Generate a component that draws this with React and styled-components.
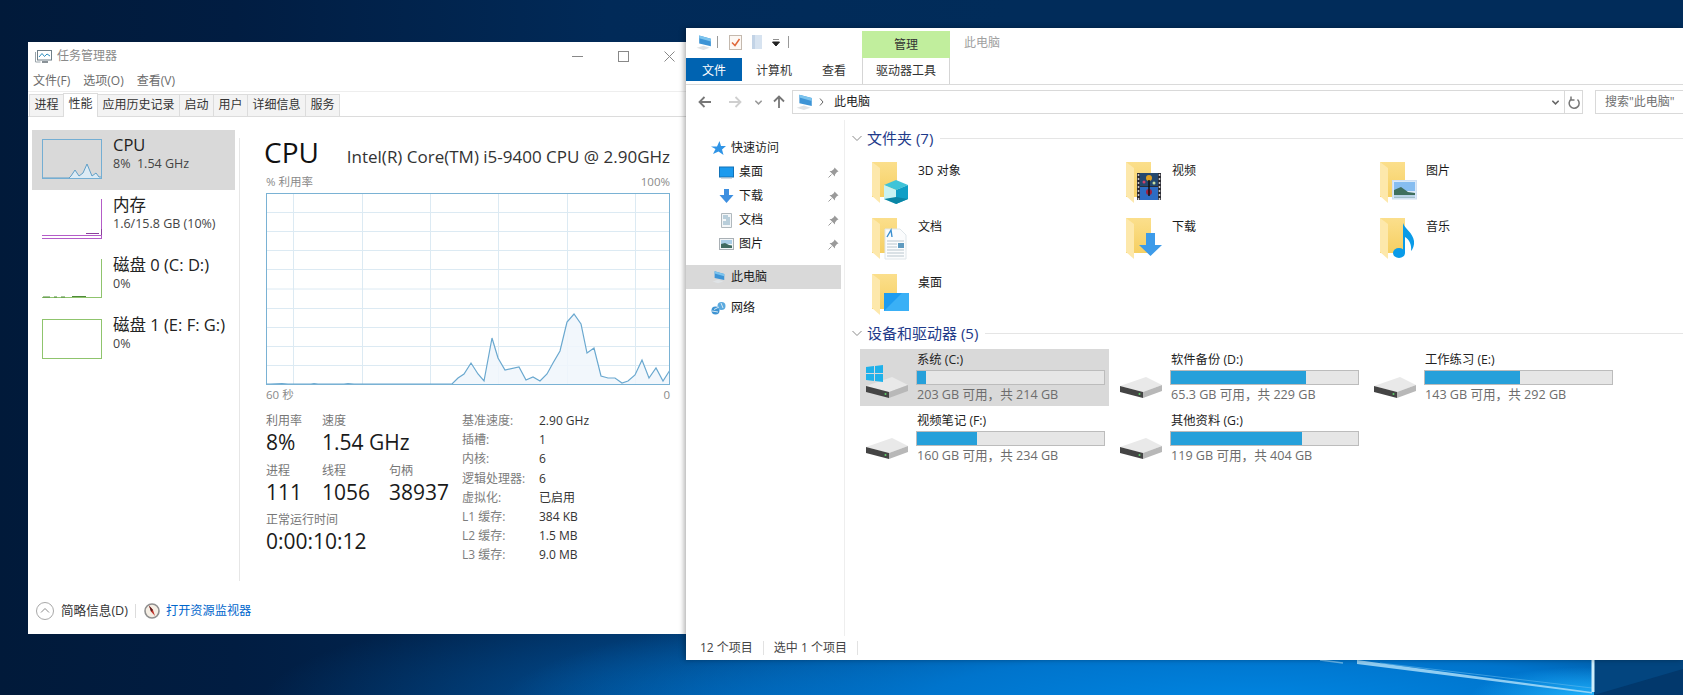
import React from 'react'
import styled, { createGlobalStyle } from 'styled-components'

const FONT = `"Open Sans", "Noto Sans CJK SC", sans-serif`

const GlobalStyle = createGlobalStyle`
  html, body { margin: 0; padding: 0; height: 100%; overflow: hidden; }
  body { font-family: ${FONT}; font-size: 12px; }
  * { box-sizing: border-box; }
`

const Desktop = styled.div`
  position: relative;
  width: 1683px;
  height: 695px;
  overflow: hidden;
  background:
    radial-gradient(ellipse 120px 30px at 1590px 697px, #1fb0fa 0%, rgba(20, 150, 240, 0) 100%),
    radial-gradient(ellipse 760px 120px at 1260px 705px, #0086e2 0%, #0074cc 45%, rgba(0, 100, 180, 0) 100%),
    radial-gradient(ellipse 520px 110px at 780px 705px, rgba(0, 95, 175, 0.9) 0%, rgba(0, 80, 150, 0) 100%),
    linear-gradient(90deg, #011a3a 0%, #011d42 14%, #012a58 36%, #012c5a 60%, #012c5a 100%);
`

const Wallpaper = styled.svg`
  position: absolute;
  left: 1300px;
  top: 655px;
`

/* ---------- task manager ---------- */

const TaskWindow = styled.section`
  position: absolute;
  left: 28px;
  top: 42px;
  width: 665px;
  height: 592px;
  background: #fff;
  display: flex;
  flex-direction: column;
  color: #222;
`
const TitleBar = styled.div`
  height: 28px;
  display: flex;
  align-items: center;
  padding-left: 7px;
  gap: 5px;
  color: #8a8a8a;
  line-height: 16px;
`
const WindowButtons = styled.div`
  margin-left: auto;
  display: flex;
  align-items: center;
  padding-right: 1px;
`
const WindowButton = styled.span`
  width: 46px;
  display: flex;
  justify-content: center;
`
const MenuBar = styled.div`
  height: 22px;
  display: flex;
  align-items: center;
  gap: 13px;
  padding-left: 5px;
  color: #6b6b6b;
  border-bottom: 1px solid #eeeeee;
  line-height: 16px;
`
const TabStrip = styled.div`
  height: 25px;
  display: flex;
  align-items: flex-end;
  padding-left: 2px;
  border-bottom: 1px solid #dcdcdc;
`
const TaskTab = styled.div`
  height: ${p => (p.$active ? 24 : 22)}px;
  padding: 0 4.5px;
  line-height: 20px;
  color: #333;
  background: ${p => (p.$active ? '#fff' : '#f3f3f3')};
  border-top: 1px solid #dcdcdc;
  border-right: 1px solid #dcdcdc;
  box-shadow: ${p => (p.$active ? '-1px 0 0 #dcdcdc' : 'none')};
  margin-bottom: ${p => (p.$active ? -1 : 0)}px;
  &:first-child { box-shadow: -1px 0 0 #dcdcdc; }
`
const TaskBody = styled.div`
  flex: 1;
  display: flex;
  min-height: 0;
`
const Sidebar = styled.div`
  width: 211px;
  padding: 13px 4px 0 4px;
`
const PerfItem = styled.div`
  height: 60px;
  display: flex;
  padding-left: 10px;
  gap: 11px;
  background: ${p => (p.$selected ? '#d9d9d9' : 'transparent')};
`
const Thumb = styled.svg`
  margin-top: 9px;
  flex: none;
`
const PerfText = styled.div`
  padding-top: 5px;
  white-space: nowrap;
`
const PerfTitle = styled.div`
  font-size: 16.5px;
  line-height: 20px;
  color: #222;
`
const PerfSub = styled.div`
  font-size: 12.5px;
  line-height: 18px;
  color: #444;
  white-space: pre;
`
const Divider = styled.div`
  width: 1px;
  height: 443px;
  margin-top: 21px;
  background: #e6e6e6;
`
const PerfPanel = styled.div`
  width: 404px;
  margin-left: 26px;
  padding-top: 17px;
`
const PanelHead = styled.div`
  display: flex;
  justify-content: space-between;
  align-items: baseline;
  height: 36px;
`
const PanelTitle = styled.div`
  font-size: 28px;
  line-height: 36px;
  margin-left: -2px;
  color: #111;
`
const PanelModel = styled.div`
  font-size: 17px;
  line-height: 20px;
  color: #333;
  white-space: nowrap;
`
const ChartLabels = styled.div`
  display: flex;
  justify-content: space-between;
  font-size: 11.5px;
  line-height: 16px;
  color: #8a8a8a;
  margin-top: ${p => p.$top}px;
`
const Chart = styled.svg`
  display: block;
  margin-top: 3px;
`
const Stats = styled.div`
  display: flex;
  margin-top: 10px;
`
const StatColumn = styled.div`
  width: 196px;
  display: flex;
  flex-direction: column;
  gap: 7.5px;
`
const StatRow = styled.div`
  display: flex;
`
const StatCell = styled.div`
  width: ${p => p.$w}px;
  flex: none;
`
const StatLabel = styled.div`
  font-size: 12px;
  line-height: 16px;
  color: #777;
  white-space: nowrap;
`
const StatValue = styled.div`
  font-size: 21px;
  line-height: 26px;
  color: #1a1a1a;
  white-space: nowrap;
`
const SpecTable = styled.div`
  display: grid;
  grid-template-columns: 77px auto;
  grid-auto-rows: 19.2px;
  align-items: center;
  line-height: 16px;
  margin-top: -1.5px;
`
const SpecLabel = styled.span`
  color: #7d7d7d;
  white-space: nowrap;
`
const SpecValue = styled.span`
  color: #333;
  white-space: nowrap;
`
const TaskFooter = styled.div`
  height: 43px;
  padding: 0 0 3px 8px;
  display: flex;
  align-items: center;
  line-height: 16px;
`
const FooterText = styled.span`
  margin-left: 7px;
  font-size: 12.6px;
  color: #333;
`
const FooterSep = styled.span`
  width: 1px;
  height: 14px;
  background: #dcdcdc;
  margin: 0 8px 0 7px;
`
const FooterLink = styled.span`
  color: #0066cc;
  margin-left: 6px;
  font-size: 12.2px;
`

/* ---------- explorer ---------- */

const ExplorerWindow = styled.section`
  position: absolute;
  left: 686px;
  top: 28px;
  right: 0;
  height: 632px;
  background: #fff;
  display: flex;
  flex-direction: column;
  box-shadow: -2px 0 5px rgba(0, 0, 0, 0.3);
  color: #1a1a1a;
`
const QuickBar = styled.div`
  height: 30px;
  flex: none;
  display: flex;
`
const QuickTools = styled.div`
  width: 176px;
  display: flex;
  align-items: center;
  padding: 0 0 2px 10px;
`
const QuickSep = styled.span`
  width: 1px;
  height: 12px;
  background: #999;
  margin: 0 ${p => p.$right}px 0 ${p => p.$left}px;
`
const ManageTab = styled.div`
  width: 88px;
  margin-top: 3px;
  background: #c1ee9d;
  text-align: center;
  line-height: 27px;
  color: #333;
`
const WindowName = styled.div`
  margin-left: 14px;
  line-height: 30px;
  color: #a0a0a0;
`
const RibbonTabs = styled.div`
  height: 27px;
  flex: none;
  display: flex;
  align-items: flex-start;
  border-bottom: 1px solid #dadada;
`
const FileTab = styled.div`
  width: 56px;
  height: 23px;
  background: #0063b1;
  color: #fff;
  text-align: center;
  line-height: 25px;
`
const RibbonTab = styled.div`
  width: ${p => p.$w}px;
  height: 26px;
  padding-top: 4px;
  text-align: center;
  line-height: 18px;
  color: #333;
  border-left: ${p => (p.$tool ? '1px solid #d5d5d5' : 'none')};
  border-right: ${p => (p.$tool ? '1px solid #d5d5d5' : 'none')};
`
const AddressRow = styled.div`
  height: 35px;
  flex: none;
  display: flex;
  align-items: center;
  padding: 0 0 1px 4px;
`
const NavButton = styled.span`
  width: ${p => p.$w}px;
  flex: none;
  display: flex;
  justify-content: center;
`
const AddressBox = styled.div`
  width: 791px;
  height: 24px;
  flex: none;
  border: 1px solid #d9d9d9;
  display: flex;
  align-items: center;
  padding-left: 3px;
  line-height: 16px;
`
const Crumb = styled.span`
  margin-left: 10px;
  color: #222;
`
const CrumbArrow = styled.svg`
  margin-left: 5px;
`
const AddressTools = styled.div`
  margin-left: auto;
  display: flex;
  align-items: center;
  height: 100%;
`
const AddressTool = styled.span`
  width: ${p => p.$w}px;
  height: 100%;
  display: flex;
  align-items: center;
  justify-content: center;
  border-left: ${p => (p.$sep ? '1px solid #d9d9d9' : 'none')};
`
const SearchBox = styled.div`
  margin-left: 12px;
  flex: 1;
  height: 24px;
  border: 1px solid #d9d9d9;
  border-right: none;
  padding-left: 9px;
  line-height: 22px;
  color: #707070;
  white-space: nowrap;
  overflow: hidden;
`
const ExplorerBody = styled.div`
  flex: 1;
  display: flex;
  min-height: 0;
`
const NavPane = styled.nav`
  width: 159px;
  flex: none;
  padding: 16px 3px 0 0;
  border-right: 1px solid #eeeeee;
`
const NavRow = styled.div`
  height: 24px;
  margin-top: ${p => p.$top || 0}px;
  padding: 0 2px 0 ${p => p.$indent}px;
  display: flex;
  align-items: center;
  gap: 5px;
  line-height: 16px;
  background: ${p => (p.$selected ? '#d9d9d9' : 'transparent')};
`
const PinSlot = styled.span`
  margin-left: auto;
  display: flex;
`
const Content = styled.main`
  flex: 1;
  min-width: 0;
  padding-top: 7px;
`
const GroupHeader = styled.div`
  height: 22px;
  display: flex;
  align-items: center;
  padding-left: 7px;
`
const GroupTitle = styled.span`
  margin-left: 5px;
  font-size: 15px;
  line-height: 20px;
  color: #1e3a8a;
  white-space: nowrap;
`
const GroupLine = styled.span`
  flex: 1;
  height: 1px;
  margin-left: 7px;
  background: #e5e5e5;
`
const FolderGrid = styled.div`
  margin-top: 10px;
  padding-left: 27px;
  display: grid;
  grid-template-columns: repeat(3, 254px);
  grid-template-rows: 56px 56px 51px;
`
const FolderCell = styled.div`
  display: flex;
  padding-top: 3px;
`
const FolderSvg = styled.svg`
  flex: none;
`
const FolderName = styled.span`
  margin: 1px 0 0 6px;
  line-height: 16px;
  color: #1a1a1a;
`
const DriveGrid = styled.div`
  margin-top: 5px;
  padding-left: 15px;
  display: grid;
  grid-template-columns: repeat(3, 249px);
  column-gap: 5px;
  row-gap: 4px;
  grid-auto-rows: 57px;
`
const DriveCell = styled.div`
  display: flex;
  padding-left: 6px;
  gap: 9px;
  background: ${p => (p.$selected ? '#d9d9d9' : 'transparent')};
`
const DriveSvg = styled.svg`
  flex: none;
  margin-top: 16px;
`
const DriveInfo = styled.div`
  padding-top: 3px;
  margin-left: -1px;
`
const DriveName = styled.div`
  line-height: 16px;
  padding-left: 1px;
  font-size: 12.3px;
  color: #222;
`
const DriveBar = styled.div`
  width: 189px;
  height: 15px;
  margin-top: 2px;
  background: #e6e6e6;
  border: 1px solid #bcbcbc;
`
const DriveFill = styled.div`
  height: 100%;
  background: #26a0da;
`
const DriveSub = styled.div`
  margin-top: 2px;
  padding-left: 1px;
  font-size: 12.6px;
  line-height: 16px;
  color: #6d6d6d;
  white-space: nowrap;
`
const StatusBar = styled.footer`
  height: 24px;
  flex: none;
  display: flex;
  align-items: center;
  padding-left: 14px;
  line-height: 16px;
  color: #444;
`
const StatusSep = styled.span`
  width: 1px;
  height: 14px;
  margin: 0 ${p => p.$right}px 0 10px;
  background: #e2e2e2;
`

/* ---------- drawings ---------- */

const PcIcon = ({ size = 16 }) => (
  <svg width={size} height={size} viewBox="0 0 16 16">
    <path d="M3 1.500 14 4.500V11.500L3 9Z" fill="#3d94d6" />
    <path d="M3 1.500 14 4.500V7L3 4Z" fill="#7cc4ee" />
    <path d="M0.500 13 7 11 13 13 7 15Z" fill="#dfe3e6" />
  </svg>
)

const TaskIcon = () => (
  <svg width="17" height="15" viewBox="0 0 17 15">
    <rect x="2.500" y="1.500" width="14" height="9.500" fill="#fff" stroke="#6f7f88" />
    <path d="M4 8 7 4.500 9.500 7.500 12 5 15 7" fill="none" stroke="#2f8fc0" />
    <path d="M0.500 3v10h5" fill="none" stroke="#9aa4aa" />
    <path d="M7 13h6" stroke="#8a9298" strokeWidth="2" />
  </svg>
)

const cpuSpark = '0,39 27,39 29,37 33,31 37,37 41,34 45,25 50,37 54,34 57,38 60,38'

const ThumbCpu = () => (
  <Thumb width="60" height="40" viewBox="0 0 60 40">
    <polygon points={`${cpuSpark} 60,39`} fill="#dcebf5" />
    <polyline points={cpuSpark} fill="none" stroke="#5f9fc8" />
    <rect x="0.500" y="0.500" width="59" height="39" fill="none" stroke="#74aed3" />
  </Thumb>
)

const ThumbMemory = () => (
  <Thumb width="60" height="41" viewBox="0 0 60 41">
    <path d="M59.500 0V40M0 36.500H59M0 39.500H59" fill="none" stroke="#b45cc8" />
    <path d="M44 34.500H57M59.500 30v6" fill="none" stroke="#8b3f9c" />
  </Thumb>
)

const ThumbDisk0 = () => (
  <Thumb width="60" height="40" viewBox="0 0 60 40">
    <path d="M59.500 0V39M0 38.500H60" fill="none" stroke="#8fc46d" />
    <path d="M1 38H8M12 38H15M19 38H23M30 37.500H44" fill="none" stroke="#4f8a3a" />
  </Thumb>
)

const ThumbDisk1 = () => (
  <Thumb width="60" height="40" viewBox="0 0 60 40">
    <rect x="0.500" y="0.500" width="59" height="39" fill="none" stroke="#8fc46d" />
  </Thumb>
)

const cpuLine = [
  [0, 191], [4, 191], [16, 190.5], [22, 191], [45, 191], [48, 190.5], [52, 191], [78, 191], [82, 190.5],
  [88, 191], [186, 191], [192, 185], [198, 181], [205, 170], [212, 181], [218, 188], [226, 145], [232, 165],
  [239, 177], [253, 174], [260, 187], [267, 184], [274, 188], [281, 181], [287, 170], [294, 158], [301, 129],
  [308, 121], [315, 131], [321, 160], [328, 155], [335, 183], [342, 185], [349, 185], [356, 190], [362, 188],
  [369, 182], [376, 167], [383, 185], [390, 175], [397, 188], [404, 177],
].map(p => p.join(',')).join(' ')

const CpuChart = () => (
  <Chart width="404" height="192" viewBox="0 0 404 192">
    {[19, 38, 57, 76, 95.5, 115, 134, 153, 172].map(y => (
      <line key={y} x1="0" x2="404" y1={y + 0.5} y2={y + 0.5} stroke="#dceaf3" />
    ))}
    {[27, 96, 164, 232, 301, 369].map(x => (
      <line key={x} y1="0" y2="192" x1={x + 0.5} x2={x + 0.5} stroke="#dceaf3" />
    ))}
    <polygon points={`${cpuLine} 404,192 0,192`} fill="#f0f6fb" fillOpacity="0.85" />
    <polyline points={cpuLine} fill="none" stroke="#6aa8cf" strokeWidth="1.2" />
    <rect x="0.500" y="0.500" width="403" height="191" fill="none" stroke="#7ab2d4" />
  </Chart>
)

const folderOverlays = {
  cube: (
    <g>
      <path d="M24 18 36 23 24 28 12 23Z" fill="#3fc4d8" />
      <path d="M12 23 24 28V42L12 37Z" fill="#c8f2f2" />
      <path d="M36 23 24 28V42L36 37Z" fill="#0f9fc6" />
      <path d="M24 35 36 37 24 42 12 37Z" fill="#0a86a6" />
    </g>
  ),
  doc: (
    <g>
      <path d="M13 11H28L34 17V41H13Z" fill="#fbfcfd" stroke="#dfe6ea" />
      <path d="M15 19 19 12 20 19" fill="none" stroke="#3a8fd0" strokeWidth="1.400" />
      <path d="M15 23H32M15 26H25M15 29H25M15 32H32M15 35H32M15 38H32" stroke="#b9c6ce" />
      <rect x="26" y="25" width="6" height="5" fill="#5f9abf" />
    </g>
  ),
  desktop: (
    <g>
      <rect x="12" y="19" width="25" height="18" fill="#1e9cf0" />
      <path d="M12 37 30 19H37V37Z" fill="#3ab0f6" />
    </g>
  ),
  video: (
    <g>
      <rect x="11" y="11" width="24" height="27" fill="#2b2b33" />
      <rect x="14" y="11" width="18" height="13" fill="#24486f" />
      <rect x="14" y="25" width="18" height="13" fill="#2d6cc4" />
      <circle cx="23" cy="16" r="3" fill="#e0a020" />
      <circle cx="18" cy="20" r="1.500" fill="#d0406a" />
      <circle cx="28" cy="21" r="1.500" fill="#c8e0a0" />
      <circle cx="23" cy="30" r="3" fill="#a02040" />
      <path d="M23 18V34" stroke="#111" strokeWidth="1.500" />
      <path d="M12.500 12V38M33.500 12V38" stroke="#c8c8c8" strokeWidth="1.500" strokeDasharray="2 2" />
    </g>
  ),
  picture: (
    <g>
      <rect x="12.500" y="18.500" width="24" height="18.500" fill="#dbe9f8" stroke="#cfdff2" />
      <rect x="14" y="20" width="21" height="9" fill="#86bdf0" />
      <path d="M14 28 21 25 28 30 35 31V35.500H14Z" fill="#3f6f5e" />
      <path d="M14 33H35V35.500H14Z" fill="#b9d2e6" />
    </g>
  ),
  download: <path d="M20 15H29V27H36L24.500 38 13 27H20Z" fill="#3d9be9" />,
  music: (
    <g>
      <ellipse cx="19" cy="35" rx="6" ry="5" fill="#0a9be8" />
      <path d="M23 35V5C25 11 33 15 34 23 34.500 27 33 31 31 33 32 27 29 21 25 19V35Z" fill="#0a9be8" />
    </g>
  ),
}

const FolderIcon = ({ overlay }) => (
  <FolderSvg width="40" height="42" viewBox="0 0 40 42">
    <defs>
      <linearGradient id="folderBack" x1="0" y1="0" x2="0" y2="1">
        <stop offset="0" stopColor="#fbdf8c" />
        <stop offset="1" stopColor="#f6cf62" />
      </linearGradient>
    </defs>
    <rect x="0" y="0" width="25" height="35" fill="url(#folderBack)" />
    <polygon points="0,0 8,6 8,41 0,34" fill="#fde8ab" />
    {folderOverlays[overlay]}
  </FolderSvg>
)

const DriveIcon = ({ system }) => (
  <DriveSvg width="42" height="33" viewBox="0 0 42 33">
    <path d="M0 21 26 12 42 20 23 27Z" fill="#e9e9e9" />
    <path d="M0 21 23 27V33L0 27Z" fill="#444" />
    <path d="M23 27 42 20V26L23 33Z" fill="#b8b8b8" />
    <circle cx="19.500" cy="29" r="1" fill="#5fd06a" />
    {system && <path d="M0 2 8 1V8H0ZM9 1 17 0V8H9ZM0 9H8V16L0 15ZM9 9H17V17L9 16Z" fill="#1fb1ea" />}
  </DriveSvg>
)

const Chevron = ({ color = '#888', small, bold }) => (
  <svg width={small ? 7 : 10} height={small ? 5 : 7} viewBox="0 0 10 7">
    <path d="M0.500 1 5 5.500 9.500 1" fill="none" stroke={color} strokeWidth={bold ? 2.2 : 1} />
  </svg>
)

const Arrow = ({ color, flip, up }) => (
  <svg
    width="14"
    height="12"
    viewBox="0 0 14 12"
    style={{ transform: up ? 'rotate(90deg)' : flip ? 'scaleX(-1)' : 'none' }}
  >
    <path d="M13 6H2M6.500 1 1.500 6 6.500 11" fill="none" stroke={color} strokeWidth="1.800" />
  </svg>
)

const Pin = () => (
  <svg width="11" height="11" viewBox="0 0 11 11">
    <path d="M6.500 0.500 10.500 4.500 9 5 7 7.500 7 9.500 1.500 4 3.500 4 6 2Z" fill="#9a9a9a" />
    <path d="M3.500 7.500 0.500 10.500" stroke="#9a9a9a" />
  </svg>
)

const navIcons = {
  star: (
    <svg width="15" height="14" viewBox="0 0 15 14">
      <path d="M8.500 0 10 5H15L11 8.500 12.500 14 7.500 10.500 2 13 4.500 8 0 5.500H6Z" fill="#2f94e6" />
    </svg>
  ),
  desktop: (
    <svg width="15" height="13" viewBox="0 0 15 13">
      <rect x="0.500" y="1" width="14" height="10" fill="#1b9aee" stroke="#1272b8" />
      <path d="M2 12H13" stroke="#9fb4c4" />
    </svg>
  ),
  download: (
    <svg width="15" height="14" viewBox="0 0 15 14">
      <path d="M5 0H10V6H14.500L7.500 14 0.500 6H5Z" fill="#3d8fe0" />
    </svg>
  ),
  doc: (
    <svg width="15" height="15" viewBox="0 0 15 15">
      <path d="M2.500 0.500H12.500V14.500H2.500Z" fill="#f3f6f8" stroke="#b0b8bd" />
      <path d="M4 3H9M4 5H11M7 7H11M4 9H11M4 11H11" stroke="#7fa6bd" />
    </svg>
  ),
  picture: (
    <svg width="15" height="13" viewBox="0 0 15 13">
      <rect x="0.500" y="0.500" width="14" height="11" fill="#f2f5f7" stroke="#a9b0b5" />
      <rect x="2" y="2" width="11" height="4" fill="#a9cde6" />
      <path d="M2 6 6 5 10 7 13 7.500V10H2Z" fill="#3f6a60" />
    </svg>
  ),
  network: (
    <svg width="15" height="15" viewBox="0 0 15 15">
      <circle cx="4.500" cy="9.500" r="4" fill="#3d93d2" />
      <circle cx="10.500" cy="5" r="4" fill="#5aa9de" />
      <path d="M8 6 3 8.500M10 2 12 7M1 10 7 11" stroke="#d4e8f5" />
    </svg>
  ),
}

/* ---------- data ---------- */

const taskTabs = ['进程', '性能', '应用历史记录', '启动', '用户', '详细信息', '服务']

const perfItems = [
  { title: 'CPU', sub: '8%  1.54 GHz', thumb: <ThumbCpu />, selected: true },
  { title: '内存', sub: '1.6/15.8 GB (10%)', thumb: <ThumbMemory /> },
  { title: '磁盘 0 (C: D:)', sub: '0%', thumb: <ThumbDisk0 /> },
  { title: '磁盘 1 (E: F: G:)', sub: '0%', thumb: <ThumbDisk1 /> },
]

const statRows = [
  [['利用率', '8%', 56], ['速度', '1.54 GHz', 67]],
  [['进程', '111', 56], ['线程', '1056', 67], ['句柄', '38937', 60]],
  [['正常运行时间', '0:00:10:12', 190]],
]

const specs = [
  ['基准速度:', '2.90 GHz'],
  ['插槽:', '1'],
  ['内核:', '6'],
  ['逻辑处理器:', '6'],
  ['虚拟化:', '已启用'],
  ['L1 缓存:', '384 KB'],
  ['L2 缓存:', '1.5 MB'],
  ['L3 缓存:', '9.0 MB'],
]

const navItems = [
  { label: '桌面', icon: 'desktop' },
  { label: '下载', icon: 'download' },
  { label: '文档', icon: 'doc' },
  { label: '图片', icon: 'picture' },
]

const folders = [
  ['3D 对象', 'cube'],
  ['视频', 'video'],
  ['图片', 'picture'],
  ['文档', 'doc'],
  ['下载', 'download'],
  ['音乐', 'music'],
  ['桌面', 'desktop'],
]

const drives = [
  { name: '系统 (C:)', sub: '203 GB 可用，共 214 GB', used: 5, system: true, selected: true },
  { name: '软件备份 (D:)', sub: '65.3 GB 可用，共 229 GB', used: 72 },
  { name: '工作练习 (E:)', sub: '143 GB 可用，共 292 GB', used: 51 },
  { name: '视频笔记 (F:)', sub: '160 GB 可用，共 234 GB', used: 32 },
  { name: '其他资料 (G:)', sub: '119 GB 可用，共 404 GB', used: 70 },
]

const TaskManager = () => (
  <TaskWindow>
    <TitleBar>
      <TaskIcon />
      <span>任务管理器</span>
      <WindowButtons>
        <WindowButton>
          <svg width="11" height="11" viewBox="0 0 11 11"><path d="M0 5.500H11" stroke="#888" /></svg>
        </WindowButton>
        <WindowButton>
          <svg width="11" height="11" viewBox="0 0 11 11"><rect x="0.500" y="0.500" width="10" height="10" fill="none" stroke="#888" /></svg>
        </WindowButton>
        <WindowButton>
          <svg width="11" height="11" viewBox="0 0 11 11"><path d="M0.500 0.500 10.500 10.500M10.500 0.500 0.500 10.500" stroke="#888" /></svg>
        </WindowButton>
      </WindowButtons>
    </TitleBar>
    <MenuBar>
      <span>文件(F)</span>
      <span>选项(O)</span>
      <span>查看(V)</span>
    </MenuBar>
    <TabStrip>
      {taskTabs.map(t => (
        <TaskTab key={t} $active={t === '性能'}>{t}</TaskTab>
      ))}
    </TabStrip>
    <TaskBody>
      <Sidebar>
        {perfItems.map(item => (
          <PerfItem key={item.title} $selected={item.selected}>
            {item.thumb}
            <PerfText>
              <PerfTitle>{item.title}</PerfTitle>
              <PerfSub>{item.sub}</PerfSub>
            </PerfText>
          </PerfItem>
        ))}
      </Sidebar>
      <Divider />
      <PerfPanel>
        <PanelHead>
          <PanelTitle>CPU</PanelTitle>
          <PanelModel>Intel(R) Core(TM) i5-9400 CPU @ 2.90GHz</PanelModel>
        </PanelHead>
        <ChartLabels $top={4}>
          <span>% 利用率</span>
          <span>100%</span>
        </ChartLabels>
        <CpuChart />
        <ChartLabels $top={2}>
          <span>60 秒</span>
          <span>0</span>
        </ChartLabels>
        <Stats>
          <StatColumn>
            {statRows.map((row, i) => (
              <StatRow key={i}>
                {row.map(([label, value, w]) => (
                  <StatCell key={label} $w={w}>
                    <StatLabel>{label}</StatLabel>
                    <StatValue>{value}</StatValue>
                  </StatCell>
                ))}
              </StatRow>
            ))}
          </StatColumn>
          <SpecTable>
            {specs.map(([k, v]) => (
              <React.Fragment key={k}>
                <SpecLabel>{k}</SpecLabel>
                <SpecValue>{v}</SpecValue>
              </React.Fragment>
            ))}
          </SpecTable>
        </Stats>
      </PerfPanel>
    </TaskBody>
    <TaskFooter>
      <svg width="18" height="18" viewBox="0 0 18 18">
        <circle cx="9" cy="9" r="8.500" fill="none" stroke="#a8a8a8" />
        <path d="M5 10.500 9 6.500 13 10.500" fill="none" stroke="#8a8a8a" />
      </svg>
      <FooterText>简略信息(D)</FooterText>
      <FooterSep />
      <svg width="16" height="16" viewBox="0 0 16 16">
        <circle cx="8" cy="8" r="7" fill="#f5eee4" stroke="#8f8f8f" strokeWidth="1.600" />
        <path d="M5 2.500 7 8.500 11 13 9 7Z" fill="#c0342c" />
        <path d="M5 2.500 7 8.500 9 7Z" fill="#5a2020" />
      </svg>
      <FooterLink>打开资源监视器</FooterLink>
    </TaskFooter>
  </TaskWindow>
)

const Explorer = () => (
  <ExplorerWindow>
    <QuickBar>
      <QuickTools>
        <PcIcon size={17} />
        <QuickSep $left={4} $right={11} />
        <svg width="13" height="15" viewBox="0 0 13 15">
          <rect x="0.500" y="0.500" width="12" height="14" fill="#fdf8f4" stroke="#c4b9ae" />
          <path d="M3 7.500 6 10.500 10.500 4" fill="none" stroke="#e0683a" strokeWidth="1.500" />
        </svg>
        <svg width="10" height="14" viewBox="0 0 10 14" style={{ marginLeft: 10 }}>
          <rect width="10" height="14" fill="#d7e3f0" />
          <rect width="3" height="14" fill="#c2d3e6" />
        </svg>
        <svg width="8" height="7" viewBox="0 0 8 7" style={{ marginLeft: 10 }}>
          <path d="M1 0H7M0.500 3 4 7 7.500 3Z" stroke="#222" fill="#222" />
        </svg>
        <QuickSep $left={8} $right={0} />
      </QuickTools>
      <ManageTab>管理</ManageTab>
      <WindowName>此电脑</WindowName>
    </QuickBar>
    <RibbonTabs>
      <FileTab>文件</FileTab>
      <RibbonTab $w={64}>计算机</RibbonTab>
      <RibbonTab $w={56}>查看</RibbonTab>
      <RibbonTab $w={88} $tool>驱动器工具</RibbonTab>
    </RibbonTabs>
    <AddressRow>
      <NavButton $w={30}><Arrow color="#777" /></NavButton>
      <NavButton $w={30}><Arrow color="#cfcfcf" flip /></NavButton>
      <NavButton $w={16}><Chevron color="#999" small bold /></NavButton>
      <NavButton $w={26}><Arrow color="#777" up /></NavButton>
      <AddressBox>
        <PcIcon size={18} />
        <CrumbArrow width="5" height="8" viewBox="0 0 5 8">
          <path d="M1 0.500 4 4 1 7.500" fill="none" stroke="#666" />
        </CrumbArrow>
        <Crumb>此电脑</Crumb>
        <AddressTools>
          <AddressTool $w={17}><Chevron color="#666" small bold /></AddressTool>
          <AddressTool $w={18} $sep>
            <svg width="12" height="13" viewBox="0 0 12 13">
              <path d="M9.500 3.500A5 5 0 1 1 3.500 3M3 0.500V4H6.500" fill="none" stroke="#777" strokeWidth="1.500" />
            </svg>
          </AddressTool>
        </AddressTools>
      </AddressBox>
      <SearchBox>搜索"此电脑"</SearchBox>
    </AddressRow>
    <ExplorerBody>
      <NavPane>
        <NavRow $indent={25}>
          {navIcons.star}
          <span>快速访问</span>
        </NavRow>
        {navItems.map(n => (
          <NavRow key={n.label} $indent={33}>
            {navIcons[n.icon]}
            <span>{n.label}</span>
            <PinSlot><Pin /></PinSlot>
          </NavRow>
        ))}
        <NavRow $indent={26} $top={9} $selected>
          <PcIcon size={14} />
          <span>此电脑</span>
        </NavRow>
        <NavRow $indent={25} $top={7}>
          {navIcons.network}
          <span>网络</span>
        </NavRow>
      </NavPane>
      <Content>
        <GroupHeader>
          <Chevron color="#8a8a8a" />
          <GroupTitle>文件夹 (7)</GroupTitle>
          <GroupLine />
        </GroupHeader>
        <FolderGrid>
          {folders.map(([name, overlay]) => (
            <FolderCell key={name}>
              <FolderIcon overlay={overlay} />
              <FolderName>{name}</FolderName>
            </FolderCell>
          ))}
        </FolderGrid>
        <GroupHeader>
          <Chevron color="#8a8a8a" />
          <GroupTitle>设备和驱动器 (5)</GroupTitle>
          <GroupLine />
        </GroupHeader>
        <DriveGrid>
          {drives.map(d => (
            <DriveCell key={d.name} $selected={d.selected}>
              <DriveIcon system={d.system} />
              <DriveInfo>
                <DriveName>{d.name}</DriveName>
                <DriveBar>
                  <DriveFill style={{ width: `${d.used}%` }} />
                </DriveBar>
                <DriveSub>{d.sub}</DriveSub>
              </DriveInfo>
            </DriveCell>
          ))}
        </DriveGrid>
      </Content>
    </ExplorerBody>
    <StatusBar>
      <span>12 个项目</span>
      <StatusSep $right={10} />
      <span>选中 1 个项目</span>
      <StatusSep $right={0} />
    </StatusBar>
  </ExplorerWindow>
)

export default function App() {
  return (
    <>
      <GlobalStyle />
      <Desktop>
        <Wallpaper width="383" height="40" viewBox="0 0 383 40">
          <polygon points="294,0 383,0 383,40 294,40" fill="#03457f" />
          <polygon points="294,40 383,14 383,40" fill="#02386c" />
          <polygon points="57,5 292,37 292,38.500 57,9" fill="#a9dcf8" fillOpacity="0.85" />
          <path d="M80 8 292 33" stroke="#6fc0f0" strokeOpacity="0.5" />
          <path d="M20 5 43 8" stroke="#8fcdf2" strokeOpacity="0.7" strokeWidth="1.500" />
          <path d="M293 0V37" stroke="#cdeefc" strokeWidth="3" />
        </Wallpaper>
        <TaskManager />
        <Explorer />
      </Desktop>
    </>
  )
}
